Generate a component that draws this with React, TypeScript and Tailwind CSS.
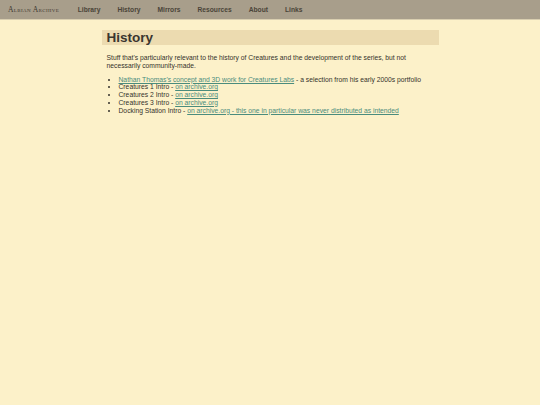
import React from "react";

const links = "text-[#4a8c7d] underline";

export default function App() {
  return (
    <div
      className="min-h-[405px] w-full bg-[#fcf1c9] text-[#35312b]"
      style={{ fontFamily: '"Liberation Sans", Arial, sans-serif' }}
    >
      <nav className="flex h-[20px] items-center border-b border-[#d9ceb0] bg-[#a89e8b] pl-[8px] pt-[1px]">
        <span
          className="mr-[10px] text-[7.6px] tracking-[0.35px] text-[#3e3932]"
          style={{ fontFamily: '"Liberation Serif", "Times New Roman", serif', fontVariant: "small-caps" }}
        >
          Albian Archive
        </span>
        {["Library", "History", "Mirrors", "Resources", "About", "Links"].map((n) => (
          <span key={n} className="px-[8.5px] text-[6.7px] font-bold text-[#4a4438]">
            {n}
          </span>
        ))}
      </nav>
      <main className="mx-auto w-[337px] pt-[10px]">
        <h1 className="flex h-[15px] items-center bg-[#ecdbb0] pl-[5px] text-[13.5px] font-bold leading-none text-[#3a352f]">
          History
        </h1>
        <p className="mt-[8.5px] pl-[5px] pr-[20px] text-[6.75px] leading-[8px]">
          Stuff that's particularly relevant to the history of Creatures and the development of the series, but not
          necessarily community-made.
        </p>
        <ul className="mt-[6px] list-disc pl-[17px] text-[6.75px] leading-[7.75px]">
          <li>
            <span className={links}>Nathan Thomas's concept and 3D work for Creatures Labs</span> - a selection from his
            early 2000s portfolio
          </li>
          <li>
            Creatures 1 Intro - <span className={links}>on archive.org</span>
          </li>
          <li>
            Creatures 2 Intro - <span className={links}>on archive.org</span>
          </li>
          <li>
            Creatures 3 Intro - <span className={links}>on archive.org</span>
          </li>
          <li>
            Docking Station Intro -{" "}
            <span className={`${links} whitespace-nowrap`}>
              on archive.org - this one in particular was never distributed as intended
            </span>
          </li>
        </ul>
      </main>
    </div>
  );
}
